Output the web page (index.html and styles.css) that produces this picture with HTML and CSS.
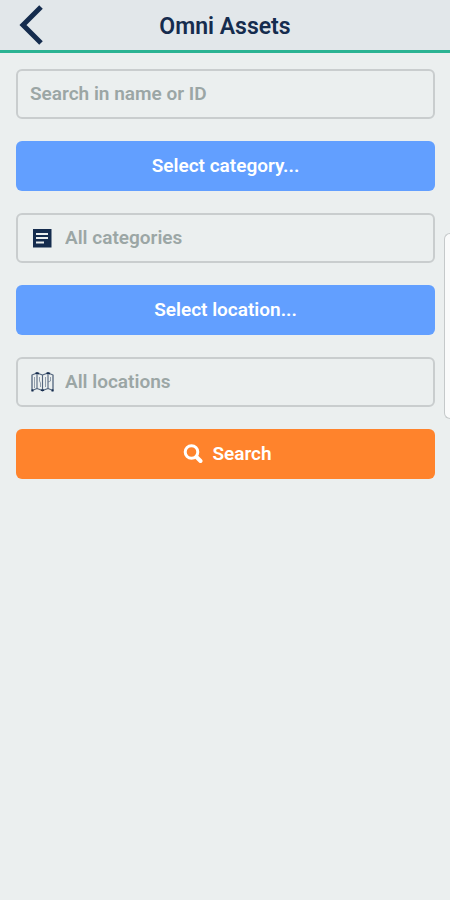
FILE: index.html
```html
<!DOCTYPE html>
<html lang="en">
<head>
<meta charset="utf-8">
<meta name="viewport" content="width=device-width, initial-scale=1">
<title>Omni Assets</title>
<link rel="stylesheet" href="styles.css">
</head>
<body>
<header class="topbar">
  <button class="back" type="button" aria-label="Back">
    <svg width="26" height="42" viewBox="0 0 26 42" fill="none" stroke="currentColor" stroke-width="5" aria-hidden="true"><path d="M23 3 5 21l18 18"/></svg>
  </button>
  <h1 class="title">Omni Assets</h1>
</header>
<main>
  <form class="filters">
    <div class="field">
      <input class="input" type="text" aria-label="Search in name or ID" placeholder="Search in name or ID">
    </div>
    <button class="btn btn-select" type="button">Select category...</button>
    <div class="field field-icon">
      <svg class="icon" width="24" height="24" viewBox="0 0 24 24" aria-hidden="true">
        <path fill="currentColor" fill-rule="evenodd" d="M3 3h18.500v18.500H3zM6 7v2h12V7zM6 11v2h12v-2zM6 15.500v2h8v-2z"/>
      </svg>
      <input class="input" type="text" aria-label="Category" placeholder="All categories" readonly>
    </div>
    <button class="btn btn-select" type="button">Select location...</button>
    <div class="field field-icon">
      <svg class="icon" width="24" height="24" viewBox="0 0 24 24" fill="none" stroke="currentColor" stroke-linejoin="round" aria-hidden="true">
        <g opacity=".7">
          <path stroke-width="1.300" d="M2 5 7 3l5.500 2L18 3l5 2v15.500l-5-2-5.500 2-5.500-2-5 2z"/>
          <path stroke-width="1.100" d="M7 3v15.500M12.500 5v15.500M18 3v15.500"/>
          <path stroke-width=".6" d="M4.500 7v11M9.500 7v4l1 2v4M15.500 7v10M18 12l2.500-1V7"/>
        </g>
        <path stroke-width="1.800" d="M5.500 3.500 7 3l2 .7M16.500 3.500 18 3l2 .7M1.500 20.500h2M11 20l1.500.5L14 20M21.500 20.500h2"/>
      </svg>
      <input class="input" type="text" aria-label="Location" placeholder="All locations" readonly>
    </div>
    <button class="btn btn-search" type="submit">
      <svg width="20" height="20" viewBox="0 0 20 20" fill="none" stroke="currentColor" aria-hidden="true"><circle cx="8.500" cy="8" r="6.300" stroke-width="3"/><path stroke-width="4" stroke-linecap="round" d="m13.500 13 4 4"/></svg>
      Search
    </button>
  </form>
</main>
<div class="drawer-handle"></div>
</body>
</html>
```
FILE: styles.css
```css
* {
  box-sizing: border-box;
}

body {
  margin: 0;
  min-height: 100vh;
  background: #ebefef;
  color: #152c4e;
  font-family: Roboto, "Liberation Sans", sans-serif;
}

.topbar {
  display: grid;
  grid-template-columns: 48px 1fr 48px;
  align-items: center;
  height: 53px;
  background: #e2e7ea;
  border-bottom: 3px solid #2bb393;
}

.back {
  display: flex;
  padding: 0 0 0 18px;
  border: 0;
  background: none;
  color: #152c4e;
}

.title {
  margin: 0;
  padding-top: 4px;
  font-size: 23px;
  line-height: 28px;
  font-weight: 600;
  text-align: center;
}

.filters {
  display: flex;
  flex-direction: column;
  gap: 22px;
  padding: 16px 15px 16px 16px;
}

.field {
  display: flex;
  align-items: center;
  height: 50px;
  padding: 0 12px;
  border: 2px solid #c9cdce;
  border-radius: 6px;
}

.field-icon {
  gap: 11px;
}

.icon {
  flex: none;
  color: #152c4e;
}

.input {
  flex: 1;
  min-width: 0;
  padding: 0;
  border: 0;
  outline: 0;
  background: none;
  color: #152c4e;
  font: 600 19px/24px Roboto, "Liberation Sans", sans-serif;
}

.input::placeholder {
  color: #9ba6a5;
  opacity: 1;
}

.btn {
  display: flex;
  align-items: center;
  justify-content: center;
  gap: 9px;
  height: 50px;
  padding: 0 12px;
  border: 0;
  border-radius: 6px;
  color: #fff;
  font: 600 19px/24px Roboto, "Liberation Sans", sans-serif;
}

.btn-select {
  background: #629fff;
}

.btn-search {
  padding-left: 16px;
  background: #ff832c;
}

.drawer-handle {
  position: fixed;
  top: 233px;
  right: 0;
  width: 6px;
  height: 186px;
  border: 1px solid #c5c9ca;
  border-right: 0;
  border-radius: 6px 0 0 6px;
  background: #fafbfb;
}
```
